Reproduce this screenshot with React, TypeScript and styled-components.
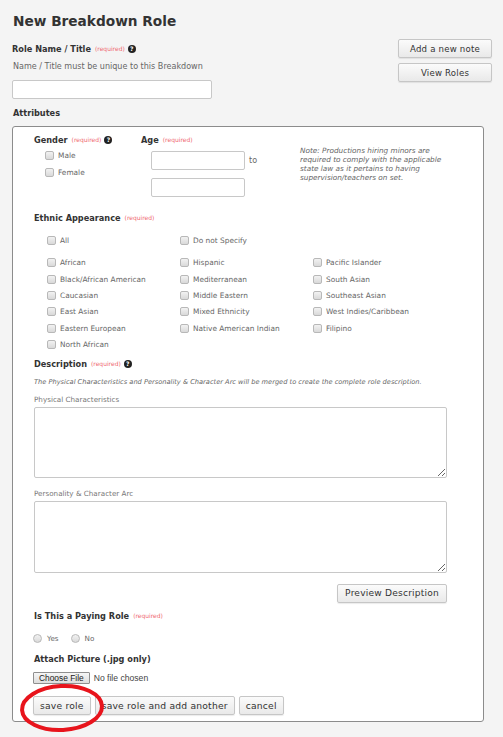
import React from 'react';
import styled, { createGlobalStyle } from 'styled-components';

const GlobalStyle = createGlobalStyle`
  html, body {
    margin: 0;
    padding: 0;
    background: #f4f4f4;
    font-family: "DejaVu Sans", Verdana, sans-serif;
    color: #333;
  }
`;

const Page = styled.div`
  padding: 12px 11px 14px 12px;
  width: 503px;
  box-sizing: border-box;
`;

const Title = styled.h1`
  margin: 0 0 0 1px;
  font-size: 13.7px;
  line-height: 18px;
  font-weight: bold;
  color: #333;
`;

const HeaderRow = styled.div`
  display: flex;
  justify-content: space-between;
  margin-top: 9px;
`;

const HeaderLeft = styled.div`
  display: flex;
  flex-direction: column;
  padding-top: 3px;
`;

const HeaderButtons = styled.div`
  display: flex;
  flex-direction: column;
  gap: 5px;
`;

const Label = styled.div<{ $top?: number; $indent?: number }>`
  display: flex;
  align-items: center;
  gap: 2px;
  font-size: 8.2px;
  font-weight: bold;
  line-height: 14px;
  height: 14px;
  color: #333;
  margin-top: ${(p) => p.$top ?? 0}px;
  margin-left: ${(p) => p.$indent ?? 0}px;
`;

const Required = styled.span`
  font-size: 6px;
  font-weight: normal;
  color: #ef6a72;
  margin-left: 2px;
`;

const Help = styled.span`
  display: inline-flex;
  align-items: center;
  justify-content: center;
  width: 8px;
  height: 8px;
  border-radius: 50%;
  background: #222;
  color: #fff;
  font-size: 6px;
  font-weight: bold;
  line-height: 1;
  margin-left: 1px;
`;

const Hint = styled.div`
  font-size: 8.05px;
  line-height: 14px;
  color: #666;
  margin-top: 4px;
  margin-left: 1px;
`;

const TextInput = styled.input<{ $width: number }>`
  box-sizing: border-box;
  width: ${(p) => p.$width}px;
  height: 19px;
  border: 1px solid #c8c8c8;
  border-radius: 2px;
  background: #fff;
  padding: 0 4px;
  font-family: inherit;
  font-size: 8px;
  margin: 0;
`;

const NameInput = styled(TextInput)`
  margin-top: 6px;
`;

const GreyButton = styled.button<{ $width?: number; $size?: number; $pad?: number }>`
  box-sizing: border-box;
  height: 19px;
  ${(p) => (p.$width ? `width: ${p.$width}px;` : '')}
  padding: 0 ${(p) => p.$pad ?? 7}px;
  border: 1px solid #c6c6c6;
  border-radius: 2px;
  background: linear-gradient(#fbfbfb, #e9e9e9);
  box-shadow: 0 1px 1px rgba(0, 0, 0, 0.08);
  font-family: inherit;
  font-size: ${(p) => p.$size ?? 8.6}px;
  color: #333;
  letter-spacing: 0.2px;
  cursor: pointer;
  white-space: nowrap;
`;

const Box = styled.div`
  margin-top: 6px;
  box-sizing: border-box;
  width: 472px;
  border: 1px solid #8c8c8c;
  border-radius: 3px;
  background: #fff;
  padding: 6px 20px 6px 21px;
`;

const GenderAgeRow = styled.div`
  display: flex;
`;

const GenderCol = styled.div`
  width: 107px;
`;

const AgeCol = styled.div`
  width: 159px;
`;

const AgeInputs = styled.div`
  display: flex;
  flex-direction: column;
  gap: 8px;
  margin-top: 4px;
  margin-left: 10px;
`;

const AgeLine = styled.div`
  display: flex;
  align-items: center;
  gap: 4px;
  font-size: 8px;
  color: #666;
`;

const Note = styled.div`
  margin-top: 13px;
  font-size: 7.3px;
  line-height: 9px;
  font-style: italic;
  color: #666;
  white-space: nowrap;
`;

const CheckList = styled.div`
  display: flex;
  flex-direction: column;
  margin-left: 11px;
`;

const CheckItem = styled.label<{ $height?: number }>`
  display: flex;
  align-items: center;
  gap: 4px;
  height: ${(p) => p.$height ?? 16.5}px;
  font-size: 7.4px;
  color: #666;
  white-space: nowrap;
`;

const Check = styled.input`
  appearance: none;
  box-sizing: border-box;
  width: 9px;
  height: 9px;
  margin: 0;
  border: 1px solid #b8b8b8;
  border-radius: 2px;
  background: linear-gradient(#f2f2f2, #d9d9d9);
  flex: none;
`;

const Radio = styled(Check)`
  border-radius: 50%;
`;

const EthnicGrid = styled.div<{ $top: number }>`
  display: grid;
  grid-template-columns: 133px 133px 1fr;
  grid-auto-rows: 16.4px;
  margin-left: 13px;
  margin-top: ${(p) => p.$top}px;
`;

const Italic = styled.div`
  font-size: 6.65px;
  line-height: 12px;
  font-style: italic;
  color: #666;
  margin-top: 5px;
  white-space: nowrap;
`;

const FieldLabel = styled.div<{ $top: number }>`
  font-size: 7.2px;
  line-height: 12px;
  color: #777;
  margin-top: ${(p) => p.$top}px;
`;

const TextArea = styled.textarea<{ $height: number }>`
  display: block;
  box-sizing: border-box;
  width: 413px;
  height: ${(p) => p.$height}px;
  margin: 1px 0 0 0;
  border: 1px solid #c8c8c8;
  border-radius: 2px;
  font-family: inherit;
  font-size: 8px;
`;

const PreviewRow = styled.div`
  display: flex;
  justify-content: flex-end;
  width: 413px;
  margin-top: 11px;
`;

const RadioRow = styled.div`
  display: flex;
  gap: 12px;
  margin-top: 9px;
  margin-left: -1px;
  height: 14px;
`;

const RadioItem = styled.label`
  display: flex;
  align-items: center;
  gap: 5px;
  font-size: 7.2px;
  color: #666;
`;

const FileRow = styled.div`
  display: flex;
  align-items: center;
  gap: 4px;
  margin-top: 6px;
  margin-left: -1px;
`;

const FileButton = styled.button`
  box-sizing: border-box;
  height: 12px;
  padding: 0 5px;
  border: 1px solid #8f8f8f;
  border-radius: 1px;
  background: linear-gradient(#f6f6f6, #dddddd);
  font-family: "Liberation Sans", Arial, sans-serif;
  font-size: 8.4px;
  line-height: 10px;
  color: #222;
`;

const FileText = styled.span`
  font-family: "Liberation Sans", Arial, sans-serif;
  font-size: 8.6px;
  color: #444;
`;

const ActionRow = styled.div`
  position: relative;
  display: flex;
  gap: 4px;
  margin-top: 12px;
  margin-left: -1px;
`;

const Circle = styled.svg`
  position: absolute;
  left: -14px;
  top: -13px;
  width: 86px;
  height: 52px;
  pointer-events: none;
  overflow: visible;
`;

const genders = ['Male', 'Female'];

const ethnicRows: string[][] = [
  ['African', 'Hispanic', 'Pacific Islander'],
  ['Black/African American', 'Mediterranean', 'South Asian'],
  ['Caucasian', 'Middle Eastern', 'Southeast Asian'],
  ['East Asian', 'Mixed Ethnicity', 'West Indies/Caribbean'],
  ['Eastern European', 'Native American Indian', 'Filipino'],
  ['North African', '', ''],
];

const noteLines = [
  'Note: Productions hiring minors are',
  'required to comply with the applicable',
  'state law as it pertains to having',
  'supervision/teachers on set.',
];

const App: React.FC = () => {
  return (
    <Page>
      <GlobalStyle />
      <Title>New Breakdown Role</Title>
      <HeaderRow>
        <HeaderLeft>
          <Label>
            Role Name / Title <Required>(required)</Required>
            <Help>?</Help>
          </Label>
          <Hint>Name / Title must be unique to this Breakdown</Hint>
          <NameInput $width={200} type="text" />
        </HeaderLeft>
        <HeaderButtons>
          <GreyButton $width={94}>Add a new note</GreyButton>
          <GreyButton $width={94}>View Roles</GreyButton>
        </HeaderButtons>
      </HeaderRow>
      <Label $top={7} $indent={1}>Attributes</Label>

      <Box>
        <GenderAgeRow>
          <GenderCol>
            <Label>
              Gender <Required>(required)</Required>
              <Help>?</Help>
            </Label>
            <CheckList>
              {genders.map((g) => (
                <CheckItem key={g} $height={17}>
                  <Check type="checkbox" />
                  {g}
                </CheckItem>
              ))}
            </CheckList>
          </GenderCol>
          <AgeCol>
            <Label>
              Age <Required>(required)</Required>
            </Label>
            <AgeInputs>
              <AgeLine>
                <TextInput $width={94} type="text" />
                to
              </AgeLine>
              <AgeLine>
                <TextInput $width={94} type="text" />
              </AgeLine>
            </AgeInputs>
          </AgeCol>
          <Note>
            {noteLines.map((line) => (
              <div key={line}>{line}</div>
            ))}
          </Note>
        </GenderAgeRow>

        <Label $top={14}>
          Ethnic Appearance <Required>(required)</Required>
        </Label>
        <EthnicGrid $top={7}>
          <CheckItem>
            <Check type="checkbox" />
            All
          </CheckItem>
          <CheckItem>
            <Check type="checkbox" />
            Do not Specify
          </CheckItem>
        </EthnicGrid>
        <EthnicGrid $top={6}>
          {ethnicRows.flat().map((name, i) =>
            name ? (
              <CheckItem key={i}>
                <Check type="checkbox" />
                {name}
              </CheckItem>
            ) : (
              <span key={i} />
            )
          )}
        </EthnicGrid>

        <Label $top={4}>
          Description <Required>(required)</Required>
          <Help>?</Help>
        </Label>
        <Italic>
          The Physical Characteristics and Personality &amp; Character Arc will be merged to create the
          complete role description.
        </Italic>
        <FieldLabel $top={6}>Physical Characteristics</FieldLabel>
        <TextArea $height={71} />
        <FieldLabel $top={10}>Personality &amp; Character Arc</FieldLabel>
        <TextArea $height={72} />
        <PreviewRow>
          <GreyButton $size={9.1}>Preview Description</GreyButton>
        </PreviewRow>

        <Label $top={6}>
          Is This a Paying Role <Required>(required)</Required>
        </Label>
        <RadioRow>
          <RadioItem>
            <Radio type="radio" name="paying" />
            Yes
          </RadioItem>
          <RadioItem>
            <Radio type="radio" name="paying" />
            No
          </RadioItem>
        </RadioRow>
        <Label $top={6}>Attach Picture (.jpg only)</Label>
        <FileRow>
          <FileButton type="button">Choose File</FileButton>
          <FileText>No file chosen</FileText>
        </FileRow>
        <ActionRow>
          <GreyButton $size={9.2} $pad={6}>save role</GreyButton>
          <GreyButton $size={9.2} $pad={6}>save role and add another</GreyButton>
          <GreyButton $size={9.2} $pad={6}>cancel</GreyButton>
          <Circle viewBox="0 0 86 52">
            <ellipse
              cx="43"
              cy="25"
              rx="40"
              ry="22"
              fill="none"
              stroke="#e8141c"
              strokeWidth="4"
              transform="rotate(-3 43 25)"
            />
          </Circle>
        </ActionRow>
      </Box>
    </Page>
  );
};

export default App;
